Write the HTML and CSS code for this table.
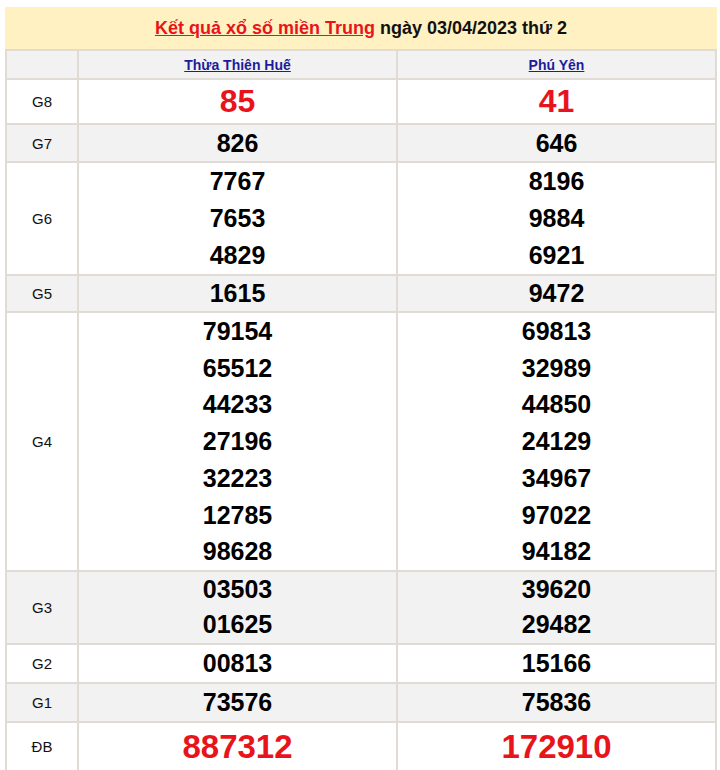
FILE: index.html
```html
<!DOCTYPE html>
<html lang="vi">
<head>
<meta charset="utf-8">
<title>Kết quả xổ số miền Trung</title>
<link rel="stylesheet" href="styles.css">
</head>
<body>
<div class="page">
  <div class="title">
    <a class="title-link" href="#">Kết quả xổ số miền Trung</a> ngày 03/04/2023 thứ 2
  </div>
  <table class="results">
    <colgroup>
      <col class="col-label">
      <col class="col-prov">
      <col class="col-prov">
    </colgroup>
    <tr class="head">
      <td></td>
      <td><a href="#">Thừa Thiên Huế</a></td>
      <td><a href="#">Phú Yên</a></td>
    </tr>
    <tr class="big">
      <td class="lbl">G8</td>
      <td><div class="num red">85</div></td>
      <td><div class="num red">41</div></td>
    </tr>
    <tr class="alt g7">
      <td class="lbl">G7</td>
      <td><div class="num">826</div></td>
      <td><div class="num">646</div></td>
    </tr>
    <tr class="g6">
      <td class="lbl">G6</td>
      <td><div class="num">7767</div><div class="num">7653</div><div class="num">4829</div></td>
      <td><div class="num">8196</div><div class="num">9884</div><div class="num">6921</div></td>
    </tr>
    <tr class="alt g5">
      <td class="lbl">G5</td>
      <td><div class="num">1615</div></td>
      <td><div class="num">9472</div></td>
    </tr>
    <tr class="g4">
      <td class="lbl">G4</td>
      <td>
        <div class="num">79154</div><div class="num">65512</div><div class="num">44233</div><div class="num">27196</div><div class="num">32223</div><div class="num">12785</div><div class="num">98628</div>
      </td>
      <td>
        <div class="num">69813</div><div class="num">32989</div><div class="num">44850</div><div class="num">24129</div><div class="num">34967</div><div class="num">97022</div><div class="num">94182</div>
      </td>
    </tr>
    <tr class="alt g3">
      <td class="lbl">G3</td>
      <td><div class="num">03503</div><div class="num">01625</div></td>
      <td><div class="num">39620</div><div class="num">29482</div></td>
    </tr>
    <tr class="g21">
      <td class="lbl">G2</td>
      <td><div class="num">00813</div></td>
      <td><div class="num">15166</div></td>
    </tr>
    <tr class="alt g21">
      <td class="lbl">G1</td>
      <td><div class="num">73576</div></td>
      <td><div class="num">75836</div></td>
    </tr>
    <tr class="db">
      <td class="lbl">ĐB</td>
      <td><div class="num red">887312</div></td>
      <td><div class="num red">172910</div></td>
    </tr>
  </table>
</div>
</body>
</html>
```

FILE: styles.css
```css
html, body {
  margin: 0;
  padding: 0;
  background: #ffffff;
}

body {
  font-family: "Liberation Sans", Arial, sans-serif;
  color: #000;
}

.page {
  width: 712px;
  padding: 7px 0 0 5px;
}

.title {
  background: #fff1c2;
  height: 42px;
  line-height: 42px;
  text-align: center;
  font-size: 18px;
  font-weight: bold;
  color: #111;
}

.title-link {
  color: #e8141b;
  text-decoration: underline;
}

.results {
  width: 712px;
  border-collapse: collapse;
  table-layout: fixed;
}

.col-label {
  width: 72px;
}

.results td {
  border: 2px solid #e0dbd5;
  padding: 0;
  text-align: center;
  vertical-align: middle;
}

.head td {
  background: #f2f2f2;
  height: 27px;
  font-size: 14px;
  font-weight: bold;
}

.head a {
  color: #1c1c9c;
  text-decoration: underline;
}

.alt td {
  background: #f2f2f2;
}

.lbl {
  font-size: 15px;
  color: #111;
}

.num {
  font-size: 25px;
  font-weight: bold;
  line-height: 37px;
  color: #000;
}

.big .num {
  font-size: 32px;
  line-height: 43px;
}

.g7 .num {
  line-height: 36px;
}

.g6 .num {
  line-height: 37px;
}

.g5 .num {
  line-height: 35px;
}

.g4 .num {
  line-height: 36.7px;
}

.g3 .num {
  line-height: 35.5px;
}

.g21 .num {
  line-height: 37px;
}

.db .num {
  font-size: 33px;
  line-height: 48px;
}

.num.red {
  color: #e8141b;
}
```
